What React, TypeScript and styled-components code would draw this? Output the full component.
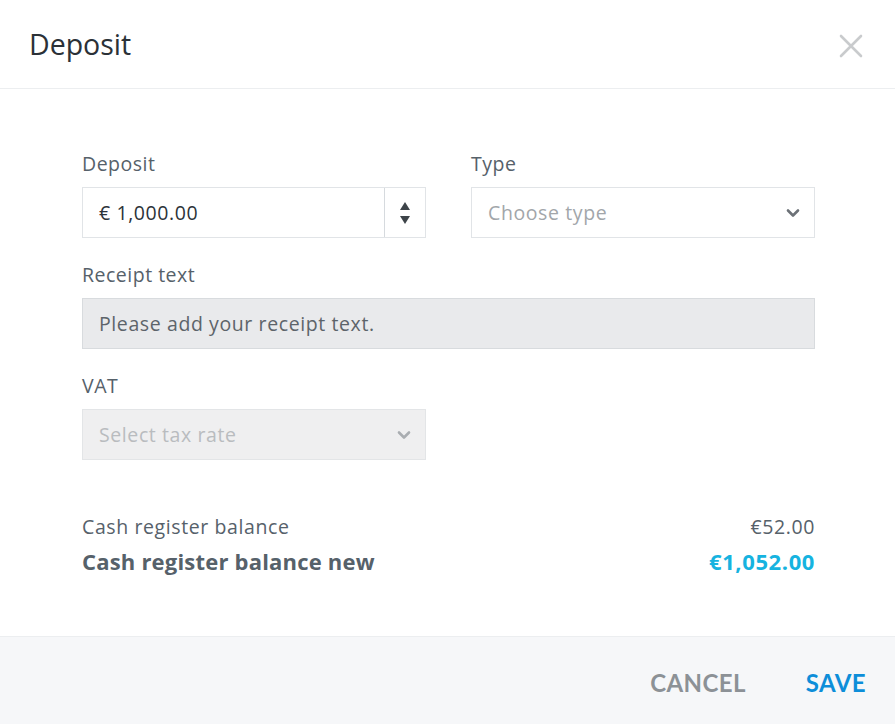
import React from "react";
import styled, { createGlobalStyle } from "styled-components";

const Global = createGlobalStyle`
  html, body { margin: 0; padding: 0; background: #fff; }
  body { font-family: "Open Sans", sans-serif; }
  * { box-sizing: border-box; }
`;

const Dialog = styled.div`
  width: 895px;
  height: 724px;
  display: flex;
  flex-direction: column;
  background: #fff;
`;

const Header = styled.header`
  height: 89px;
  border-bottom: 1px solid #eceef0;
  display: flex;
  align-items: center;
  justify-content: space-between;
  padding: 0 30px 0 29px;
`;

const Title = styled.h1`
  margin: 0;
  font-family: "Open Sans", sans-serif;
  font-weight: 400;
  font-size: 28.5px;
  line-height: 36px;
  color: #2b3137;
`;

const Close = styled.button`
  border: 0;
  background: none;
  padding: 0;
  width: 28px;
  height: 28px;
  display: flex;
  align-items: center;
  justify-content: center;
  margin-top: 4px;
  cursor: pointer;
`;

const Body = styled.main`
  flex: 1;
  padding: 63px 80px 0 82px;
  display: flex;
  flex-direction: column;
`;

const Row = styled.div`
  display: grid;
  grid-template-columns: 344px 344px;
  column-gap: 45px;
`;

const Field = styled.div<{ $wide?: boolean }>`
  display: flex;
  flex-direction: column;
  width: ${(p) => (p.$wide ? "733px" : "344px")};
  margin-bottom: 25px;
`;

const Label = styled.label`
  font-family: "Open Sans", sans-serif;
  font-size: 19.5px;
  letter-spacing: 0.5px;
  color: #56616a;
  line-height: 24px;
  margin-bottom: 11px;
`;

const Box = styled.div<{ $bg?: string; $border?: string }>`
  height: 51px;
  border: 1px solid ${(p) => p.$border || "#e1e4e7"};
  background: ${(p) => p.$bg || "#fff"};
  display: flex;
  align-items: center;
  font-family: "Open Sans", sans-serif;
  font-size: 19.5px;
  letter-spacing: 0.6px;
`;

const Value = styled.span<{ $color: string }>`
  flex: 1;
  padding-left: 16px;
  color: ${(p) => p.$color};
`;

const Spinner = styled.div`
  width: 41px;
  height: 100%;
  border-left: 1px solid #d6dade;
  display: flex;
  flex-direction: column;
  align-items: center;
  justify-content: center;
  gap: 6px;
`;

const Chevron = styled.span`
  width: 42px;
  display: flex;
  align-items: center;
  justify-content: center;
`;

const Summary = styled.div`
  margin-top: 29px;
  width: 733px;
  display: flex;
  flex-direction: column;
  font-family: "Open Sans", sans-serif;
`;

const SumRow = styled.div<{ $big?: boolean }>`
  display: flex;
  justify-content: space-between;
  align-items: baseline;
  font-size: ${(p) => (p.$big ? "22px" : "19.5px")};
  letter-spacing: ${(p) => (p.$big ? "0.2px" : "0.6px")};
  font-weight: ${(p) => (p.$big ? 700 : 400)};
  color: #56616a;
  line-height: ${(p) => (p.$big ? "42px" : "26px")};
`;

const Amount = styled.span<{ $accent?: boolean }>`
  color: ${(p) => (p.$accent ? "#16b3e0" : "#56616a")};
  letter-spacing: ${(p) => (p.$accent ? "0.6px" : "inherit")};
`;

const Footer = styled.footer`
  height: 88px;
  background: #f6f7f9;
  border-top: 1px solid #eceef0;
  display: flex;
  justify-content: flex-end;
  align-items: center;
  padding: 4px 29px 0 0;
  gap: 60px;
`;

const Btn = styled.button<{ $primary?: boolean }>`
  border: 0;
  background: none;
  padding: 0;
  font-family: Lato, sans-serif;
  font-weight: 700;
  font-size: 24px;
  letter-spacing: 0.4px;
  color: ${(p) => (p.$primary ? "#0d8ed9" : "#8c9196")};
  cursor: pointer;
`;

const ChevronIcon = ({ color }: { color: string }) => (
  <svg width="14" height="10" viewBox="0 0 14 10">
    <path d="M2 2.5 L7 7.5 L12 2.5" fill="none" stroke={color} strokeWidth="2.6" strokeLinecap="round" strokeLinejoin="round" />
  </svg>
);

export default function App() {
  return (
    <>
      <Global />
      <Dialog>
        <Header>
          <Title>Deposit</Title>
          <Close aria-label="close">
            <svg width="24" height="24" viewBox="0 0 24 24">
              <path d="M2 2 L22 22 M22 2 L2 22" stroke="#c9cbcd" strokeWidth="2.6" strokeLinecap="round" />
            </svg>
          </Close>
        </Header>
        <Body>
          <Row>
            <Field>
              <Label>Deposit</Label>
              <Box>
                <Value $color="#2c3339">€ 1,000.00</Value>
                <Spinner>
                  <svg width="10" height="8" viewBox="0 0 10 8"><path d="M5 0 L10 8 L0 8 Z" fill="#3d4449" /></svg>
                  <svg width="10" height="8" viewBox="0 0 10 8"><path d="M0 0 L10 0 L5 8 Z" fill="#3d4449" /></svg>
                </Spinner>
              </Box>
            </Field>
            <Field>
              <Label>Type</Label>
              <Box>
                <Value $color="#a2a6aa">Choose type</Value>
                <Chevron><ChevronIcon color="#6c7177" /></Chevron>
              </Box>
            </Field>
          </Row>
          <Field $wide>
            <Label>Receipt text</Label>
            <Box $bg="#e9eaec" $border="#d8dbde">
              <Value $color="#5d646a">Please add your receipt text.</Value>
            </Box>
          </Field>
          <Field>
            <Label>VAT</Label>
            <Box $bg="#efeff0" $border="#e3e5e7">
              <Value $color="#b9bcbf">Select tax rate</Value>
              <Chevron><ChevronIcon color="#a9adb1" /></Chevron>
            </Box>
          </Field>
          <Summary>
            <SumRow>
              <span>Cash register balance</span>
              <Amount>€52.00</Amount>
            </SumRow>
            <SumRow $big>
              <span>Cash register balance new</span>
              <Amount $accent>€1,052.00</Amount>
            </SumRow>
          </Summary>
        </Body>
        <Footer>
          <Btn>CANCEL</Btn>
          <Btn $primary>SAVE</Btn>
        </Footer>
      </Dialog>
    </>
  );
}
